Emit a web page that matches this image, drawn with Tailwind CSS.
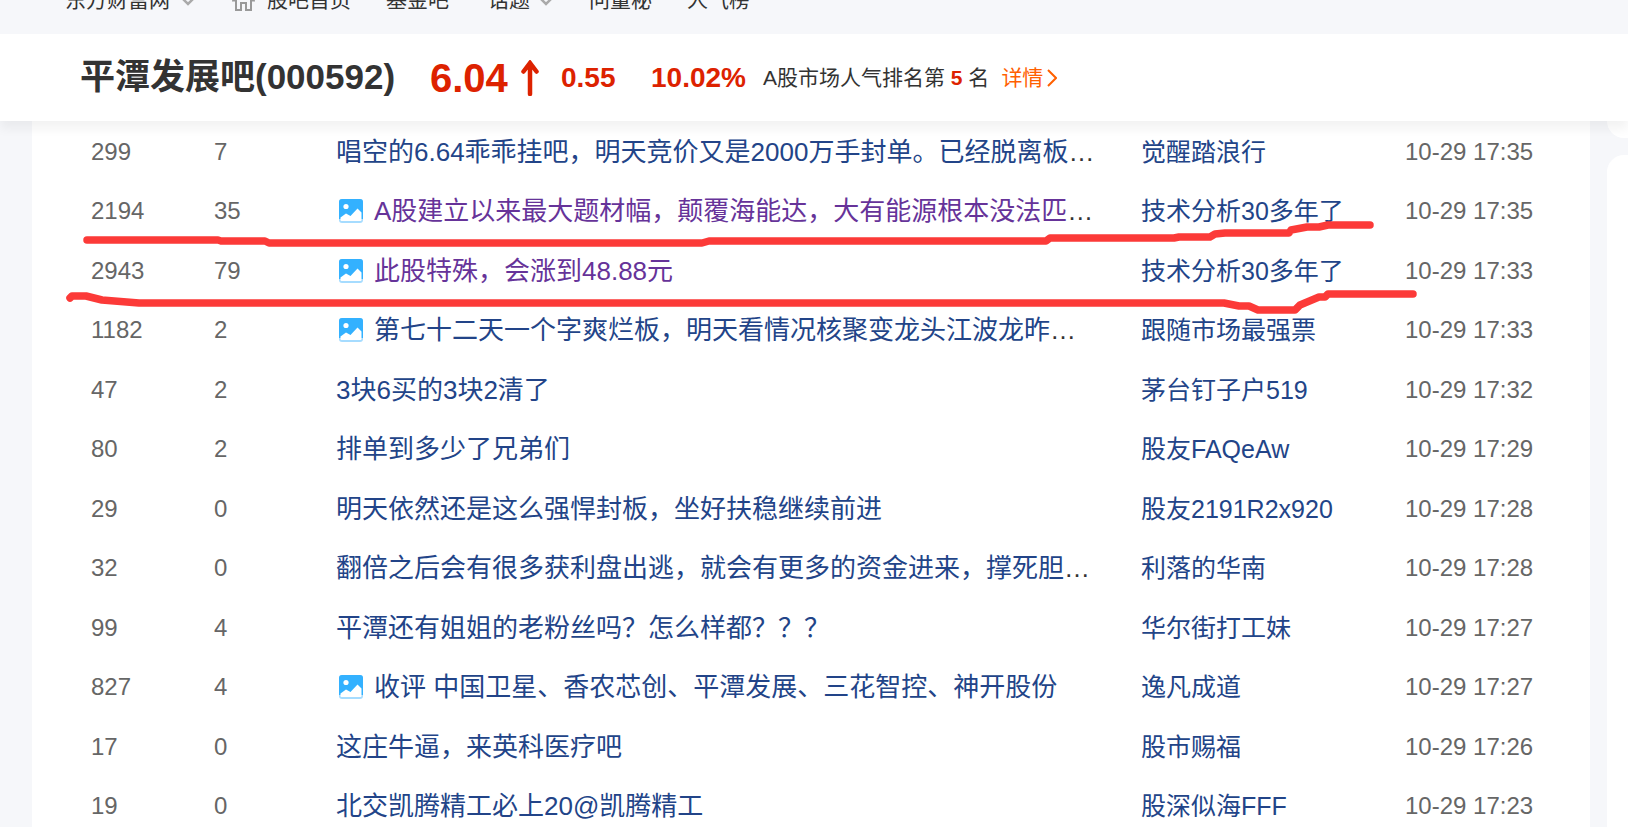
<!DOCTYPE html>
<html lang="zh-CN">
<head>
  <meta charset="UTF-8">
  <meta name="viewport" content="width=device-width, initial-scale=1.0">
  <title>平潭发展吧(000592)</title>
  <script src="https://cdn.jsdelivr.net/npm/@tailwindcss/browser@4"></script>
</head>
<body class="relative h-screen overflow-hidden bg-[#f6f7fa] font-['Liberation_Sans','Noto_Sans_CJK_SC',sans-serif] text-[#333]">

  <!-- Shared icons -->
  <svg class="hidden">
    <symbol id="pic" viewBox="0 0 26 26">
      <rect x="1" y="1" width="24" height="24" rx="3" fill="#a6dcff"/>
      <path d="M4 1h18a3 3 0 0 1 3 3v17H1V4a3 3 0 0 1 3-3z" fill="#33b1ff"/>
      <circle cx="8" cy="8.500" r="2.600" fill="#fff"/>
      <path d="M2.500 19.500l5.500-4 4.500 2.500 7-7.500 4 4V22a1 1 0 0 1-1 1H3.500a1 1 0 0 1-1-1z" fill="#fff"/>
    </symbol>
    <symbol id="down" viewBox="0 0 16 10">
      <path d="M1 1l7 7 7-7" fill="none" stroke="#aaa" stroke-width="2.500"/>
    </symbol>
  </svg>

  <!-- Site nav -->
  <nav class="h-[34px] overflow-hidden">
    <div class="-mt-4 flex h-8 items-center pl-[65px] text-[21px] leading-8">
      <a href="#" class="flex w-[167px] items-center gap-[10px]">东方财富网<svg class="mt-[2px] h-[10px] w-4"><use href="#down"/></svg></a>
      <a href="#" class="flex w-[154px] items-center gap-3">
        <svg class="h-[22px] w-[23px]" viewBox="0 0 23 22" fill="none" stroke="#999" stroke-width="2"><path d="M4 11.500H1.500L11.500 1.500 21.500 11.500H19V21H14V14H9V21H4z"/></svg>股吧首页</a>
      <a href="#" class="w-[102px]">基金吧</a>
      <a href="#" class="flex w-[101px] items-center gap-2">话题<svg class="mt-[2px] h-[10px] w-4"><use href="#down"/></svg></a>
      <a href="#" class="w-[98px]">问董秘</a>
      <a href="#">人气榜</a>
    </div>
  </nav>

  <!-- Stock header -->
  <header class="relative z-10 flex h-[87px] items-center bg-white pl-[80px] font-bold text-[#dd2200] shadow-[0_8px_10px_rgba(0,0,0,0.05)]">
    <h1 class="w-[350px] text-[35px] text-[#333]">平潭发展吧(000592)</h1>
    <span class="w-[91px] text-[40px]">6.04</span>
    <svg class="h-9 w-[18px]" viewBox="0 0 18 36" fill="none" stroke="#dd2200" stroke-width="4.500" stroke-linecap="round"><path d="M9 3v31M2.500 11.500L9 3l6.500 8.500"/></svg>
    <span class="ml-[22px] w-[90px] text-[28px]">0.55</span>
    <span class="w-[112px] text-[28px]">10.02%</span>
    <p class="text-[21px] font-normal text-[#333]">A股市场人气排名第 <b class="text-[#dd2200]">5</b> 名</p>
    <a href="#" class="ml-3 flex items-center text-[21px] font-normal text-[#ff6000]">详情<svg class="ml-1 h-[18px] w-[10px]" viewBox="0 0 10 18" fill="none" stroke="#ff6000" stroke-width="2"><path d="M1 1l8 8-8 8"/></svg></a>
  </header>

  <div class="flex pl-8">
    <!-- Post list -->
    <main class="mr-[17px] flex-1 bg-white pt-px">
      <table class="w-full table-fixed text-left text-2xl text-[#666]">
        <colgroup>
          <col class="w-[182px]">
          <col class="w-[122px]">
          <col>
          <col class="w-[264px]">
          <col class="w-[185px]">
        </colgroup>
        <tbody id="posts"></tbody>
      </table>
    </main>

    <!-- Sidebar cards -->
    <aside class="flex w-[21px] flex-col gap-[17px]">
      <div class="h-[17px] rounded-bl-[17px] bg-white"></div>
      <div class="flex-1 rounded-tl-[17px] bg-white"></div>
    </aside>
  </div>

  <!-- Hand-drawn underlines -->
  <svg class="pointer-events-none absolute top-0 left-0 z-20 h-[827px] w-[1628px]" viewBox="0 0 1628 827" fill="none" stroke="#fc3a38" stroke-width="7.500" stroke-linecap="round" stroke-linejoin="round">
    <path d="M87 240H218L221 241H265L269 243H702L709 241H1046L1050 238H1174L1179 237H1210L1215 234L1225 233H1289L1291 230L1307 227H1319L1328 225H1370"/>
    <path d="M70 298L72 296H86L102 300L139 303H1224L1239 306H1249L1258 310H1295L1300 305L1319 297H1325L1328 294H1413"/>
  </svg>

  <script>
    // reads, replies, title, author, time, has picture, visited, cut off
    const posts = [
      [299, 7, '唱空的6.64乖乖挂吧，明天竞价又是2000万手封单。已经脱离板', '觉醒踏浪行', '10-29 17:35', 0, 0, 1],
      [2194, 35, 'A股建立以来最大题材幅，颠覆海能达，大有能源根本没法匹', '技术分析30多年了', '10-29 17:35', 1, 1, 1],
      [2943, 79, '此股特殊，会涨到48.88元', '技术分析30多年了', '10-29 17:33', 1, 1, 0],
      [1182, 2, '第七十二天一个字爽烂板，明天看情况核聚变龙头江波龙昨', '跟随市场最强票', '10-29 17:33', 1, 0, 1],
      [47, 2, '3块6买的3块2清了', '茅台钉子户519', '10-29 17:32', 0, 0, 0],
      [80, 2, '排单到多少了兄弟们', '股友FAQeAw', '10-29 17:29', 0, 0, 0],
      [29, 0, '明天依然还是这么强悍封板，坐好扶稳继续前进', '股友2191R2x920', '10-29 17:28', 0, 0, 0],
      [32, 0, '翻倍之后会有很多获利盘出逃，就会有更多的资金进来，撑死胆', '利落的华南', '10-29 17:28', 0, 0, 1],
      [99, 4, '平潭还有姐姐的老粉丝吗？怎么样都？？？', '华尔街打工妹', '10-29 17:27', 0, 0, 0],
      [827, 4, '收评 中国卫星、香农芯创、平潭发展、三花智控、神开股份', '逸凡成道', '10-29 17:27', 1, 0, 0],
      [17, 0, '这庄牛逼，来英科医疗吧', '股市赐福', '10-29 17:26', 0, 0, 0],
      [19, 0, '北交凯腾精工必上20@凯腾精工', '股深似海FFF', '10-29 17:23', 0, 0, 0],
    ];

    const icon = '<svg class="mr-[10px] ml-[2px] h-[26px] w-[26px] shrink-0"><use href="#pic"/></svg>';

    document.getElementById('posts').innerHTML = posts.map(([reads, replies, title, author, time, pic, visited, cut]) => `
      <tr class="odd:h-[59px] even:h-[60px]">
        <td class="pl-[59px]">${reads}</td>
        <td>${replies}</td>
        <td>
          <div class="flex items-center text-[26px] leading-8 whitespace-nowrap text-[#333]">
            ${pic ? icon : ''}<a href="#" class="${visited ? 'text-[#663399]' : 'text-[#224488]'}">${title}</a>${cut ? '…' : ''}
          </div>
        </td>
        <td class="text-[25px] leading-8"><a href="#" class="text-[#224488]">${author}</a></td>
        <td>${time}</td>
      </tr>`).join('');
  </script>
</body>
</html>
